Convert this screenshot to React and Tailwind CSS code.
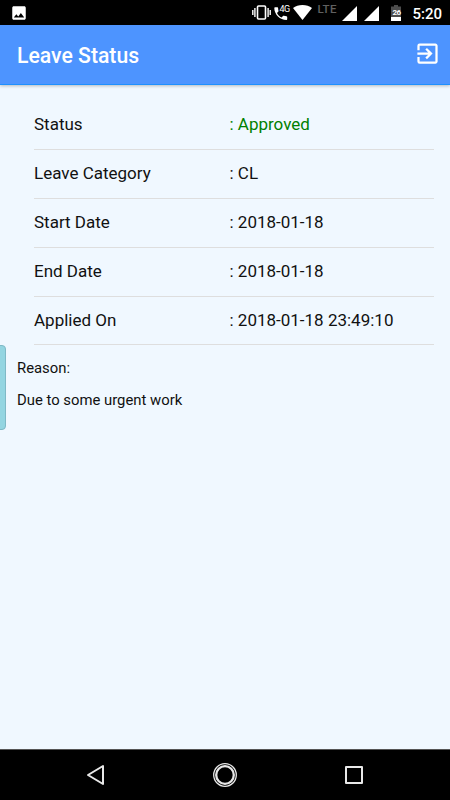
import { MdExitToApp, MdImage } from 'react-icons/md';

const details = [
    { label: 'Status', value: 'Approved', color: 'text-[#008000]' },
    { label: 'Leave Category', value: 'CL' },
    { label: 'Start Date', value: '2018-01-18' },
    { label: 'End Date', value: '2018-01-18' },
    { label: 'Applied On', value: '2018-01-18 23:49:10' },
];

function Signal() {
    return (
        <svg className="w-[15px] h-[15px]" viewBox="0 0 15 15" fill="currentColor">
            <path d="M0 15L15 0v15z" />
        </svg>
    );
}

function StatusBar() {
    return (
        <div className="h-[25px] shrink-0 bg-black text-white flex items-start pl-[10px] pr-[8px]">
            <MdImage className="w-[18px] h-[18px] mt-[4px]" />
            <div className="flex items-start ml-auto">
                <svg className="w-[19px] h-[15px] mt-[5px]" viewBox="0 0 19 15" fill="none" stroke="currentColor">
                    <rect x="5.500" y="1" width="8" height="13" rx="1" strokeWidth="1.600" />
                    <path d="M2.900 3v9M16.100 3v9M.8 5v5M18.200 5v5" strokeWidth="1.400" />
                </svg>
                <div className="relative w-[16px] h-[16px] ml-[3px] mr-[-1px] mt-[5px]">
                    <svg className="w-[14px] h-[16px]" viewBox="0 0 14 16" fill="currentColor">
                        <path d="M1 2.300h2.400c.4 0 .7.300.7.700 0 1 .2 1.900.4 2.700.1.300 0 .6-.1.800L3 8c1 2 2.600 3.500 4.500 4.500L9 11c.2-.2.500-.3.800-.2.900.3 1.800.4 2.700.4.400 0 .7.300.7.700v2.400c0 .4-.3.700-.7.700C6 15 .3 9.500.3 3c0-.4.300-.7.7-.7z" />
                    </svg>
                    <span className="absolute left-[5px] top-0 text-[9px] leading-[9px] font-normal tracking-[-0.5px]">4G</span>
                </div>
                <svg className="w-[19px] h-[15px] ml-[4px] mt-[5px]" viewBox="0 0 19 15" fill="currentColor">
                    <path d="M9.500 15L0 3C2.500 1 5.800 0 9.500 0S16.500 1 19 3z" />
                </svg>
                <span className="ml-[5px] mt-[4px] w-[20px] text-[11.5px] leading-[11px] font-medium tracking-[0.3px] text-[#606060]">LTE</span>
                <div className="flex gap-[7px] ml-[5px] mt-[6px]">
                    <Signal />
                    <Signal />
                </div>
                <div className="relative ml-[12px] mt-[5px] w-[10px] h-[16px]">
                    <svg className="w-[10px] h-[16px]" viewBox="0 0 10 16">
                        <path fill="#4d4d4d" d="M3 0h4v1.500h3V16H0V1.500h3z" />
                        <path fill="#fff" d="M0 12h10v4H0z" />
                    </svg>
                    <span className="absolute left-[1px] top-[3px] w-[10px] text-[8px] leading-[9px] font-bold tracking-[-0.6px]">26</span>
                </div>
                <span className="ml-[11px] mt-[5px] text-[15px] leading-[18px] font-medium">5:20</span>
            </div>
        </div>
    );
}

function Header() {
    return (
        <header className="h-[60px] shrink-0 flex items-center justify-between pl-[17px] pr-[9px] bg-[#4d94ff] border-b border-[#1e90ff] text-white shadow-[0_1px_3px_rgba(0,0,0,0.25)]">
            <h1 className="mt-[2px] text-[21.2px] font-medium">Leave Status</h1>
            <button className="mt-[-2px]">
                <MdExitToApp className="block w-[27px] h-[27px]" />
            </button>
        </header>
    );
}

function NavBar() {
    return (
        <nav className="h-[51px] shrink-0 bg-black border-t border-[#555555] text-[#e8e8e8] flex items-center justify-between pl-[86px] pr-[86px]">
            <svg className="w-[20px] h-[22px]" viewBox="0 0 20 22" fill="none" stroke="currentColor" strokeWidth="2" strokeLinejoin="round">
                <path d="M2 11L17 2v18z" />
            </svg>
            <svg className="w-[24px] h-[24px]" viewBox="0 0 24 24" fill="none" stroke="currentColor">
                <circle cx="12" cy="12" r="11.300" strokeWidth="1.300" />
                <circle cx="12" cy="12" r="8.800" strokeWidth="2.300" />
            </svg>
            <svg className="w-[20px] h-[20px]" viewBox="0 0 20 20" fill="none" stroke="currentColor" strokeWidth="2" strokeLinejoin="round">
                <path d="M2 2h16v16H2z" />
            </svg>
        </nav>
    );
}

export default function App() {
    return (
        <div className="relative w-[450px] h-[800px] flex flex-col overflow-hidden bg-[#f0f8ff] text-[#111111] font-[Roboto,sans-serif]">
            <StatusBar />
            <Header />

            <main className="flex-1 pt-[16px]">
                <dl className="ml-[34px] mr-[16px]">
                    {details.map((item) => (
                        <div
                            key={item.label}
                            className="flex items-center h-[48.9px] pt-[0.4px] border-b border-[#dedede] text-[17px]"
                        >
                            <dt className="w-[195.5px]">{item.label}</dt>
                            <dd className={item.color}>: {item.value}</dd>
                        </div>
                    ))}
                </dl>
                <div className="ml-[17px] mt-[13px] text-[14.85px] leading-[20px]">
                    <p>Reason:</p>
                    <p className="mt-[12px]">Due to some urgent work</p>
                </div>
            </main>

            <NavBar />

            {/* Edge panel handle */}
            <div className="absolute left-[-5px] top-[345px] w-[10.5px] h-[85px] rounded-[4px] bg-[#93d5e1] border border-[#7fb9c6]" />
        </div>
    );
}
